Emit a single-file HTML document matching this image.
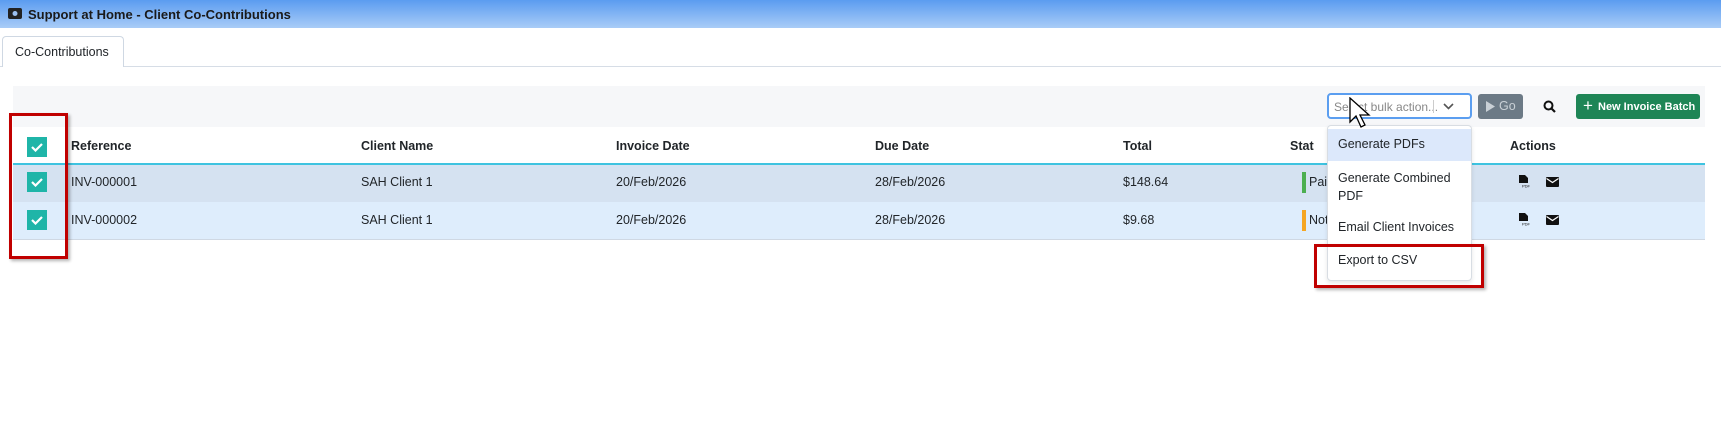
<!DOCTYPE html>
<html><head><meta charset="utf-8"><style>
*{box-sizing:border-box;margin:0;padding:0}
body{width:1721px;height:446px;background:#fff;font-family:"Liberation Sans",Arial,sans-serif;font-size:12.5px;color:#212529;position:relative;overflow:hidden}
.a{position:absolute;white-space:nowrap}
.title{left:0;top:0;width:1721px;height:28px;background:linear-gradient(#5b9cf0,#a9ccf7);}
.title span{position:absolute;left:28px;top:7px;font-weight:bold;font-size:13px;color:#1a1a1a}
.tab{left:2px;top:36px;width:122px;height:31px;border:1px solid #cfd8e3;border-bottom:none;border-radius:4px 4px 0 0;background:#fff}
.tab span{position:absolute;left:12px;top:8px;font-size:12.5px}
.cb{width:20px;height:20px;background:#1fb5a8;}
.cb svg{position:absolute;left:4px;top:5px}
.h{font-weight:bold;top:139px}
.r1{top:175px}.r2{top:213px}
.menu div{position:absolute;left:10px;font-size:12.5px}
</style></head><body>
<div class="a title"><svg class="a" style="left:8px;top:8px" width="14" height="11"><rect x="0" y="0" width="14" height="11" rx="2" fill="#222"/><circle cx="7" cy="5.5" r="2.5" fill="#9cc0f0"/></svg><span>Support at Home - Client Co-Contributions</span></div>
<div class="a tab"><span>Co-Contributions</span></div>
<div class="a" style="left:124px;top:66px;width:1597px;height:1px;background:#d6dde6"></div>
<div class="a" style="left:0;top:66px;width:2px;height:1px;background:#d6dde6"></div>
<div class="a" style="left:13px;top:86px;width:1692px;height:41px;background:#f6f7f9"></div>
<div class="a" style="left:13px;top:163px;width:1692px;height:2px;background:#3ec3e0"></div>
<div class="a" style="left:13px;top:165px;width:1692px;height:37px;background:#d5e2f1"></div>
<div class="a" style="left:13px;top:202px;width:1692px;height:37px;background:#deedfc"></div>
<div class="a" style="left:13px;top:239px;width:1692px;height:1px;background:#cfd8e3"></div>
<div class="a cb" style="left:27px;top:137px"><svg width="12" height="10"><path d="M1 5l3.5 3.5L11 2" stroke="#fff" stroke-width="2.2" fill="none"/></svg></div>
<div class="a cb" style="left:27px;top:172px"><svg width="12" height="10"><path d="M1 5l3.5 3.5L11 2" stroke="#fff" stroke-width="2.2" fill="none"/></svg></div>
<div class="a cb" style="left:27px;top:210px"><svg width="12" height="10"><path d="M1 5l3.5 3.5L11 2" stroke="#fff" stroke-width="2.2" fill="none"/></svg></div>
<div class="a h" style="left:71px">Reference</div><div class="a h" style="left:361px">Client Name</div><div class="a h" style="left:616px">Invoice Date</div><div class="a h" style="left:875px">Due Date</div><div class="a h" style="left:1123px">Total</div><div class="a h" style="left:1290px">Stat</div><div class="a h" style="left:1510px">Actions</div>
<div class="a r1" style="left:71px">INV-000001</div><div class="a r1" style="left:361px">SAH Client 1</div><div class="a r1" style="left:616px">20/Feb/2026</div><div class="a r1" style="left:875px">28/Feb/2026</div><div class="a r1" style="left:1123px">$148.64</div>
<div class="a r2" style="left:71px">INV-000002</div><div class="a r2" style="left:361px">SAH Client 1</div><div class="a r2" style="left:616px">20/Feb/2026</div><div class="a r2" style="left:875px">28/Feb/2026</div><div class="a r2" style="left:1123px">$9.68</div>
<div class="a" style="left:1302px;top:172px;width:4px;height:21px;background:#4caf50"></div><div class="a r1" style="left:1309px">Pai</div>
<div class="a" style="left:1302px;top:210px;width:4px;height:21px;background:#f5a623"></div><div class="a r2" style="left:1309px">Not</div>
<svg class="a" style="left:1518px;top:175px" width="14" height="13"><path d="M1 0h6l3 3v5H1z" fill="#111"/><text x="4" y="12.5" font-size="4" font-family="Liberation Sans" fill="#111">PDF</text></svg>
<svg class="a" style="left:1546px;top:177px" width="13" height="10"><rect width="13" height="10" rx="1" fill="#111"/><path d="M0.5 1.5l6 4 6-4" stroke="#fff" stroke-width="1.2" fill="none"/></svg>
<svg class="a" style="left:1518px;top:213px" width="14" height="13"><path d="M1 0h6l3 3v5H1z" fill="#111"/><text x="4" y="12.5" font-size="4" font-family="Liberation Sans" fill="#111">PDF</text></svg>
<svg class="a" style="left:1546px;top:215px" width="13" height="10"><rect width="13" height="10" rx="1" fill="#111"/><path d="M0.5 1.5l6 4 6-4" stroke="#fff" stroke-width="1.2" fill="none"/></svg>
<div class="a" style="left:1327px;top:93px;width:145px;height:26px;border:2px solid #5b9ef0;border-radius:4px;background:#fff"><span class="a" style="left:5px;top:5px;color:#888;font-size:12px">Select bulk action...</span><div class="a" style="left:104px;top:5px;width:1px;height:13px;background:#ccc"></div><svg class="a" style="left:114px;top:8px" width="11" height="7"><path d="M1 1l4.5 4.5L10 1" stroke="#555" stroke-width="1.6" fill="none"/></svg></div>
<div class="a" style="left:1478px;top:94px;width:45px;height:25px;background:#6c7a86;border-radius:3px;color:#c9d0d6;font-size:12.5px"><svg class="a" style="left:8px;top:7px" width="9" height="11"><path d="M0 0l9 5.5L0 11z" fill="#c9d0d6"/></svg><span class="a" style="left:21px;top:5px">Go</span></div>
<svg class="a" style="left:1543px;top:100px" width="13" height="13"><circle cx="5.5" cy="5.5" r="4" stroke="#111" stroke-width="2" fill="none"/><path d="M8.5 8.5l3.5 3.5" stroke="#111" stroke-width="2.2"/></svg>
<div class="a" style="left:1576px;top:94px;width:124px;height:25px;background:#1e8556;border-radius:3px;color:#fff;font-weight:bold;font-size:11px"><span class="a" style="left:7px;top:2px;font-size:17px;font-weight:normal">+</span><span class="a" style="left:22px;top:7px">New Invoice Batch</span></div>
<div class="a menu" style="left:1327px;top:125px;width:145px;height:156px;background:#fff;border:1px solid #d8dde3;border-radius:4px;box-shadow:0 2px 4px rgba(0,0,0,.1)">
<div style="left:0;top:3px;width:143px;height:32px;background:#dce8fb"></div>
<div style="top:11px">Generate PDFs</div>
<div style="top:43px;line-height:18px">Generate Combined<br>PDF</div>
<div style="top:94px">Email Client Invoices</div>
<div style="top:127px">Export to CSV</div>
</div>
<div class="a" style="left:9px;top:113px;width:59px;height:146px;border:3px solid #c00000;box-shadow:2px 2px 3px rgba(0,0,0,.3)"></div>
<div class="a" style="left:1314px;top:244px;width:170px;height:44px;border:3px solid #c00000;box-shadow:2px 2px 3px rgba(0,0,0,.3)"></div>
<svg class="a" style="left:1349px;top:97px" width="28" height="36"><path d="M1 1v24l6-6 5 11 4-2-5-10h9z" fill="#fff" stroke="#000" stroke-width="1.3"/></svg>
</body></html>
